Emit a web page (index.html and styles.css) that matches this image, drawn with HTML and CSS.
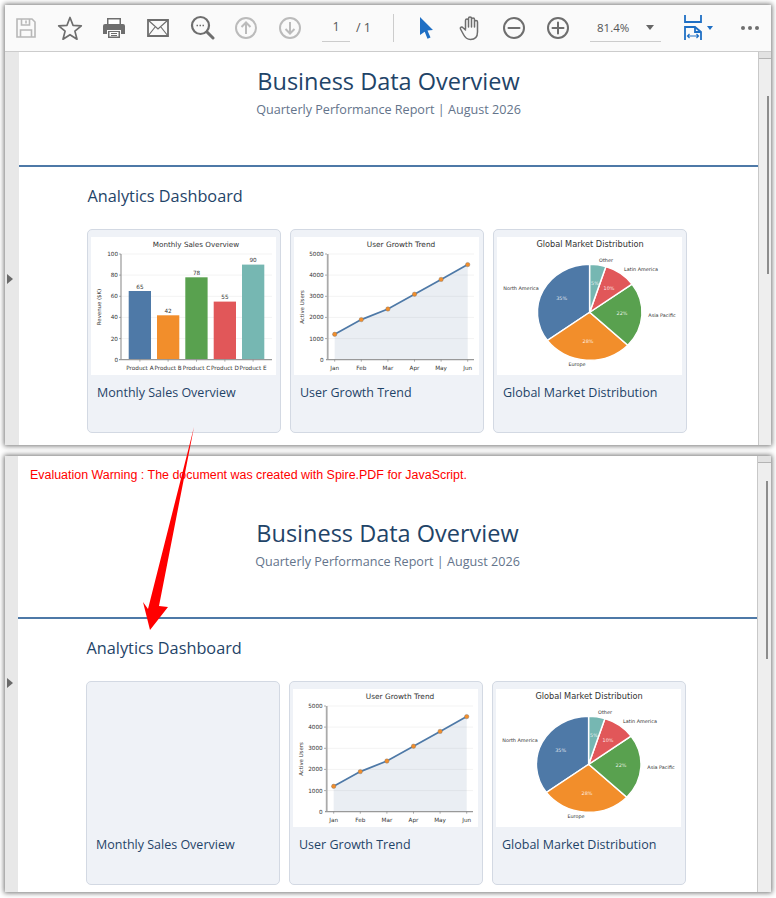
FILE: index.html
```html
<!DOCTYPE html>
<html lang="en">
<head>
  <meta charset="UTF-8">
  <meta name="viewport" content="width=device-width, initial-scale=1.0">
  <title>Business Data Overview</title>
  <link rel="stylesheet" href="styles.css">
</head>
<body>
  <!-- Reader window with toolbar -->
  <section class="window window-top">
    <header class="toolbar">
      <span class="tool"><svg width="24" height="24" viewBox="0 0 24 24" fill="none" stroke="#b8b8b8" stroke-width="1.6"><path d="M3 3h15l3 3v15H3z"/><path d="M7.500 3v6h8V3M12 4.500v3M6.500 21v-7h11v7"/></svg></span>
      <span class="tool"><svg width="26" height="26" viewBox="0 0 26 26" fill="none" stroke="#6e6e6e" stroke-width="1.700" stroke-linejoin="round"><path d="M13 2.500l3 7.800 8.300.5-6.400 5.300 2.100 8.100-7-4.500-7 4.500 2.100-8.100-6.400-5.300 8.300-.5z"/></svg></span>
      <span class="tool"><svg width="24" height="24" viewBox="0 0 24 24"><path fill="#6e6e6e" d="M5 2h14v6H5zM3 8h18a2 2 0 0 1 2 2v8h-4v-4H5v4H1v-8a2 2 0 0 1 2-2zM6 15h12v7H6z"/><path fill="#fff" d="M6.500 3.500h11V8h-11zM7.500 16h9v4.500h-9z"/><path stroke="#6e6e6e" d="M9 17.500h6M9 19.500h6"/></svg></span>
      <span class="tool"><svg width="24" height="20" viewBox="0 0 24 20" fill="none" stroke="#6e6e6e" stroke-width="1.800"><path d="M2 2h20v16H2z"/><path stroke-width="1.200" d="M2 2l10 9 10-9M2 18l7.500-9.500M22 18l-7.500-9.500"/></svg></span>
      <span class="tool"><svg width="25" height="25" viewBox="0 0 25 25" fill="none" stroke="#6e6e6e"><circle cx="10.500" cy="10.500" r="8.500" stroke-width="2.200"/><path stroke-width="3" stroke-linecap="round" d="M17 17l6 6"/><path stroke-width="1.500" stroke-dasharray="1.500 1.500" d="M6.500 10.500h8.500"/></svg></span>
      <span class="tool"><svg width="24" height="24" viewBox="0 0 24 24" fill="none" stroke="#bbb" stroke-width="2"><circle cx="12" cy="12" r="10"/><path d="M12 18V6.500M7.500 11L12 6.500l4.500 4.500"/></svg></span>
      <span class="tool"><svg width="24" height="24" viewBox="0 0 24 24" fill="none" stroke="#bbb" stroke-width="2"><circle cx="12" cy="12" r="10"/><path d="M12 6v11.500M7.500 13l4.500 4.500 4.500-4.500"/></svg></span>
      <span class="page-input">1</span>
      <span class="page-total">/ 1</span>
      <span class="divider"></span>
      <span class="tool"><svg width="16" height="24" viewBox="0 0 16 24"><path fill="#1f6fc4" d="M2 1l13 13-5.500.5 3 7-3 1.200-2.800-7L2 19z"/></svg></span>
      <span class="tool"><svg width="25" height="26" viewBox="0 0 24 26" fill="none" stroke="#6e6e6e" stroke-width="1.500" stroke-linecap="round" stroke-linejoin="round"><path d="M7 14V5.500a1.500 1.500 0 0 1 3 0V3.500a1.500 1.500 0 0 1 3 0V4.500a1.500 1.500 0 0 1 3 0V7a1.500 1.500 0 0 1 3 0v10c0 4.500-2.500 7.500-7 7.500-4 0-5.500-2-7-5l-3-5.500c-.8-1.500 1.300-2.800 2.500-1.300L7 15M10 5v7M13 4v8M16 5v7"/></svg></span>
      <span class="tool"><svg width="24" height="24" viewBox="0 0 24 24" fill="none" stroke="#6e6e6e" stroke-width="2"><circle cx="12" cy="12" r="10"/><path stroke-linecap="round" d="M6.500 12h11"/></svg></span>
      <span class="tool"><svg width="24" height="24" viewBox="0 0 24 24" fill="none" stroke="#6e6e6e" stroke-width="2"><circle cx="12" cy="12" r="10"/><path stroke-linecap="round" d="M6.500 12h11M12 6.500v11"/></svg></span>
      <span class="zoom-select">81.4%<i class="caret"></i></span>
      <span class="fit-tool"><svg width="18" height="25" viewBox="0 0 18 25" fill="none" stroke="#1f6fc4" stroke-width="1.800"><path d="M1 0v7h16V0"/><path d="M1 25V12h10l6 5v8"/><path d="M11 12v5h6"/><path stroke-width="1.200" d="M3.500 21h11M5.500 19l-2 2 2 2M12.500 19l2 2-2 2"/></svg><i class="caret caret-blue"></i></span>
      <span class="more-tool"><i></i><i></i><i></i></span>
    </header>

    <div class="viewer">
      <div class="strip"><i class="strip-arrow"></i></div>
      <main class="page">
        <div class="report-header">
          <h1 class="report-title">Business Data Overview</h1>
          <p class="report-subtitle">Quarterly Performance Report | August 2026</p>
        </div>
        <div class="dashboard">
          <h2 class="dashboard-title">Analytics Dashboard</h2>
          <div class="cards">
            <article class="card">
              <div class="chart">
                <svg class="chart-svg" width="185" height="138" viewBox="0 0 185 138">
                  <text class="c-title" x="105" y="10">Monthly Sales Overview</text>
                  <path class="c-grid" d="M30 17h151M30 38.100h151M30 59.300h151M30 80.400h151M30 101.600h151"/>
                  <rect x="37.700" y="54" width="22.300" height="68.700" fill="#4e79a7"/>
                  <rect x="66" y="78.300" width="22.300" height="44.400" fill="#f28e2b"/>
                  <rect x="94.300" y="40.300" width="22.300" height="82.400" fill="#59a14f"/>
                  <rect x="122.700" y="64.600" width="22.300" height="58.100" fill="#e15759"/>
                  <rect x="151" y="27.600" width="22.300" height="95.100" fill="#76b7b2"/>
                  <path class="c-axis" d="M30 17v105.700M28 122.700h153"/>
                  <path class="c-tick" d="M28 17h2M28 38.100h2M28 59.300h2M28 80.400h2M28 101.600h2M48.900 122.700v2M77.100 122.700v2M105.500 122.700v2M133.900 122.700v2M162.100 122.700v2"/>
                  <g class="c-num c-end">
                    <text x="27" y="19">100</text><text x="27" y="40.100">80</text><text x="27" y="61.300">60</text><text x="27" y="82.400">40</text><text x="27" y="103.600">20</text><text x="27" y="124.700">0</text>
                  </g>
                  <g class="c-num c-mid">
                    <text x="48.900" y="51.500">65</text><text x="77.100" y="75.800">42</text><text x="105.500" y="37.800">78</text><text x="133.900" y="62.100">55</text><text x="162.100" y="25.100">90</text>
                    <text x="48.900" y="132.500">Product A</text><text x="77.100" y="132.500">Product B</text><text x="105.500" y="132.500">Product C</text><text x="133.900" y="132.500">Product D</text><text x="162.100" y="132.500">Product E</text>
                  </g>
                  <text class="c-label" transform="translate(10 70) rotate(-90)">Revenue ($K)</text>
                </svg>
              </div>
              <h3 class="card-title">Monthly Sales Overview</h3>
            </article>

            <article class="card">
              <div class="chart">
                <svg class="chart-svg" width="185" height="138" viewBox="0 0 185 138">
                  <text class="c-title c-title-line" x="107" y="10">User Growth Trend</text>
                  <path class="c-grid" d="M34 17h146M34 38.100h146M34 59.300h146M34 80.400h146M34 101.600h146"/>
                  <path fill="#5d7f9f" opacity="0.13" d="M40.700 97.300L67.300 82.600 93.900 72 120.500 57.200 147.100 42.400 173.700 27.600V122.700H40.700z"/>
                  <path class="c-axis c-axis-line" d="M33.700 17v105.700"/>
                  <path class="c-axis" d="M32 122.700h148"/>
                  <path class="c-tick" d="M31 17h2M31 38.100h2M31 59.300h2M31 80.400h2M31 101.600h2M40.700 122.700v2M67.300 122.700v2M93.900 122.700v2M120.500 122.700v2M147.100 122.700v2M173.700 122.700v2"/>
                  <path fill="none" stroke="#4e79a7" stroke-width="1.700" d="M40.700 97.300L67.300 82.600 93.900 72 120.500 57.200 147.100 42.400 173.700 27.600"/>
                  <g fill="#f28e2b" stroke="#777" stroke-width="0.400">
                    <circle cx="40.700" cy="97.300" r="2.200"/><circle cx="67.300" cy="82.600" r="2.200"/><circle cx="93.900" cy="72" r="2.200"/><circle cx="120.500" cy="57.200" r="2.200"/><circle cx="147.100" cy="42.400" r="2.200"/><circle cx="173.700" cy="27.600" r="2.200"/>
                  </g>
                  <g class="c-num c-end">
                    <text x="29.700" y="19">5000</text><text x="29.700" y="40.100">4000</text><text x="29.700" y="61.300">3000</text><text x="29.700" y="82.400">2000</text><text x="29.700" y="103.600">1000</text><text x="29.700" y="124.700">0</text>
                  </g>
                  <g class="c-num c-mid">
                    <text x="40.700" y="132.500">Jan</text><text x="67.300" y="132.500">Feb</text><text x="93.900" y="132.500">Mar</text><text x="120.500" y="132.500">Apr</text><text x="147.100" y="132.500">May</text><text x="173.700" y="132.500">Jun</text>
                  </g>
                  <text class="c-label" transform="translate(9.500 70) rotate(-90)">Active Users</text>
                </svg>
              </div>
              <h3 class="card-title">User Growth Trend</h3>
            </article>

            <article class="card">
              <div class="chart">
                <svg class="chart-svg" width="185" height="138" viewBox="0 0 185 138">
                  <text class="c-title c-title-pie" x="93" y="10">Global Market Distribution</text>
                  <g transform="translate(92.700 75.300) scale(1.090 1)" stroke="#fff" stroke-width="1.400">
                    <path fill="#4e79a7" d="M0 0L0 -48A48 48 0 0 0 -38.830 28.210Z"/>
                    <path fill="#f28e2b" d="M0 0L-38.830 28.210A48 48 0 0 0 34.990 32.860Z"/>
                    <path fill="#59a14f" d="M0 0L34.990 32.860A48 48 0 0 0 38.830 -28.210Z"/>
                    <path fill="#e15759" d="M0 0L38.830 -28.210A48 48 0 0 0 14.830 -45.650Z"/>
                    <path fill="#76b7b2" d="M0 0L14.830 -45.650A48 48 0 0 0 0 -48Z"/>
                  </g>
                  <g class="c-pie">
                    <text x="109" y="24.500">Other</text><text x="144" y="33.800">Latin America</text><text x="24" y="52.800">North America</text><text x="165" y="79.800">Asia Pacific</text><text x="80" y="128.800">Europe</text>
                  </g>
                  <g class="c-pie c-pct">
                    <text x="64.700" y="62.800">35%</text><text x="91" y="105.500">28%</text><text x="125" y="77.800">22%</text><text x="112" y="52.800">10%</text><text x="98" y="47.500">5%</text>
                  </g>
                </svg>
              </div>
              <h3 class="card-title">Global Market Distribution</h3>
            </article>
          </div>
        </div>
      </main>
      <div class="scrollbar"><i class="scroll-btn"></i><i class="scroll-thumb"></i></div>
    </div>
  </section>

  <!-- Second capture, same page with the watermark line -->
  <section class="window window-bottom">
    <div class="viewer">
      <div class="strip"><i class="strip-arrow"></i></div>
      <main class="page">
        <p class="warning">Evaluation Warning : The document was created with Spire.PDF for JavaScript.</p>
        <div class="report-header">
          <h1 class="report-title">Business Data Overview</h1>
          <p class="report-subtitle">Quarterly Performance Report | August 2026</p>
        </div>
        <div class="dashboard">
          <h2 class="dashboard-title">Analytics Dashboard</h2>
          <div class="cards">
            <article class="card">
              <div class="chart chart-empty"></div>
              <h3 class="card-title">Monthly Sales Overview</h3>
            </article>

            <article class="card">
              <div class="chart">
                <svg class="chart-svg" width="185" height="138" viewBox="0 0 185 138">
                  <text class="c-title c-title-line" x="107" y="10">User Growth Trend</text>
                  <path class="c-grid" d="M34 17h146M34 38.100h146M34 59.300h146M34 80.400h146M34 101.600h146"/>
                  <path fill="#5d7f9f" opacity="0.13" d="M40.700 97.300L67.300 82.600 93.900 72 120.500 57.200 147.100 42.400 173.700 27.600V122.700H40.700z"/>
                  <path class="c-axis c-axis-line" d="M33.700 17v105.700"/>
                  <path class="c-axis" d="M32 122.700h148"/>
                  <path class="c-tick" d="M31 17h2M31 38.100h2M31 59.300h2M31 80.400h2M31 101.600h2M40.700 122.700v2M67.300 122.700v2M93.900 122.700v2M120.500 122.700v2M147.100 122.700v2M173.700 122.700v2"/>
                  <path fill="none" stroke="#4e79a7" stroke-width="1.700" d="M40.700 97.300L67.300 82.600 93.900 72 120.500 57.200 147.100 42.400 173.700 27.600"/>
                  <g fill="#f28e2b" stroke="#777" stroke-width="0.400">
                    <circle cx="40.700" cy="97.300" r="2.200"/><circle cx="67.300" cy="82.600" r="2.200"/><circle cx="93.900" cy="72" r="2.200"/><circle cx="120.500" cy="57.200" r="2.200"/><circle cx="147.100" cy="42.400" r="2.200"/><circle cx="173.700" cy="27.600" r="2.200"/>
                  </g>
                  <g class="c-num c-end">
                    <text x="29.700" y="19">5000</text><text x="29.700" y="40.100">4000</text><text x="29.700" y="61.300">3000</text><text x="29.700" y="82.400">2000</text><text x="29.700" y="103.600">1000</text><text x="29.700" y="124.700">0</text>
                  </g>
                  <g class="c-num c-mid">
                    <text x="40.700" y="132.500">Jan</text><text x="67.300" y="132.500">Feb</text><text x="93.900" y="132.500">Mar</text><text x="120.500" y="132.500">Apr</text><text x="147.100" y="132.500">May</text><text x="173.700" y="132.500">Jun</text>
                  </g>
                  <text class="c-label" transform="translate(9.500 70) rotate(-90)">Active Users</text>
                </svg>
              </div>
              <h3 class="card-title">User Growth Trend</h3>
            </article>

            <article class="card">
              <div class="chart">
                <svg class="chart-svg" width="185" height="138" viewBox="0 0 185 138">
                  <text class="c-title c-title-pie" x="93" y="10">Global Market Distribution</text>
                  <g transform="translate(92.700 75.300) scale(1.090 1)" stroke="#fff" stroke-width="1.400">
                    <path fill="#4e79a7" d="M0 0L0 -48A48 48 0 0 0 -38.830 28.210Z"/>
                    <path fill="#f28e2b" d="M0 0L-38.830 28.210A48 48 0 0 0 34.990 32.860Z"/>
                    <path fill="#59a14f" d="M0 0L34.990 32.860A48 48 0 0 0 38.830 -28.210Z"/>
                    <path fill="#e15759" d="M0 0L38.830 -28.210A48 48 0 0 0 14.830 -45.650Z"/>
                    <path fill="#76b7b2" d="M0 0L14.830 -45.650A48 48 0 0 0 0 -48Z"/>
                  </g>
                  <g class="c-pie">
                    <text x="109" y="24.500">Other</text><text x="144" y="33.800">Latin America</text><text x="24" y="52.800">North America</text><text x="165" y="79.800">Asia Pacific</text><text x="80" y="128.800">Europe</text>
                  </g>
                  <g class="c-pie c-pct">
                    <text x="64.700" y="62.800">35%</text><text x="91" y="105.500">28%</text><text x="125" y="77.800">22%</text><text x="112" y="52.800">10%</text><text x="98" y="47.500">5%</text>
                  </g>
                </svg>
              </div>
              <h3 class="card-title">Global Market Distribution</h3>
            </article>
          </div>
        </div>
      </main>
      <div class="scrollbar"><i class="scroll-btn"></i><i class="scroll-thumb"></i></div>
    </div>
  </section>

  <!-- Red annotation arrow over both captures -->
  <svg class="annotation" width="776" height="898" viewBox="0 0 776 898">
    <path fill="#ff0000" d="M194 427L159 606 168 607 150 630 143 602 148 609z"/>
  </svg>
</body>
</html>
```

FILE: styles.css
```css
* {
  margin: 0;
  padding: 0;
  box-sizing: border-box;
}

html, body {
  height: 898px;
  overflow: hidden;
}

body {
  font-family: "Open Sans", sans-serif;
  background: #fff;
  color: #1f3a5f;
  position: relative;
  display: flex;
  flex-direction: column;
  gap: 11px;
  padding: 5px 5px 0;
}

i {
  display: block;
}

/* Windows */
.window {
  width: 766px;
  display: flex;
  flex-direction: column;
  overflow: hidden;
  background: #fff;
  box-shadow: 0 0 5px 1px rgba(0, 0, 0, 0.55);
}

.window-top {
  height: 440px;
}

.window-bottom {
  height: 436px;
}

/* Toolbar */
.toolbar {
  height: 47px;
  flex: none;
  display: flex;
  align-items: center;
  background: #fafafa;
  border-bottom: 1px solid #ccc;
  padding-bottom: 1px;
  font-size: 12.5px;
  color: #555;
}

.tool {
  width: 44px;
  flex: none;
  display: flex;
  justify-content: center;
  align-items: center;
}

.tool:first-child {
  margin-left: -1px;
}

.page-input {
  width: 28px;
  height: 28px;
  margin-left: 10px;
  margin-top: 1px;
  line-height: 26px;
  text-align: center;
  border-bottom: 1px solid #ccc;
}

.page-total {
  margin-left: 6px;
  width: 17px;
}

.divider {
  width: 1px;
  height: 28px;
  margin-left: 20px;
  margin-right: 10px;
  background: #ccc;
}

.zoom-select {
  width: 71px;
  height: 28px;
  margin-left: 10px;
  margin-top: 1px;
  padding-left: 7px;
  line-height: 26px;
  font-size: 11.5px;
  border-bottom: 1px solid #ccc;
  display: flex;
  align-items: center;
  justify-content: space-between;
  padding-right: 7px;
}

.caret {
  width: 0;
  height: 0;
  border-left: 4.5px solid transparent;
  border-right: 4.5px solid transparent;
  border-top: 5px solid #666;
}

.caret-blue {
  border-left-width: 3.5px;
  border-right-width: 3.5px;
  border-top: 4px solid #1f6fc4;
}

.fit-tool {
  margin-left: 23px;
  display: flex;
  align-items: center;
  gap: 5px;
  width: 30px;
}

.more-tool {
  margin-left: 27px;
  display: flex;
  gap: 3px;
}

.more-tool i {
  width: 4px;
  height: 4px;
  border-radius: 50%;
  background: #6e6e6e;
}

/* Viewer area */
.viewer {
  flex: 1;
  min-height: 0;
  display: flex;
}

.strip {
  width: 14px;
  flex: none;
  background: #e8e8e8;
  padding: 222px 0 0 2px;
}

.window-bottom .strip {
  width: 13px;
  padding-top: 222px;
}

.strip-arrow {
  width: 0;
  height: 0;
  border-top: 5.5px solid transparent;
  border-bottom: 5.5px solid transparent;
  border-left: 6px solid #6a6a6a;
}

.page {
  flex: 1;
  min-width: 0;
  overflow: hidden;
  background: #fff;
}

.scrollbar {
  width: 13px;
  flex: none;
  background: #eee;
  border-left: 1px solid #c8c8c8;
}

.window-bottom .scrollbar {
  width: 14px;
}

.scroll-btn {
  height: 7px;
  background: #e2e2e2;
  border-bottom: 1px solid #b4b4b4;
}

.scroll-thumb {
  width: 2px;
  height: 178px;
  margin: 37px 0 0 8px;
  background: #8c8c8c;
}

.window-bottom .scroll-thumb {
  margin-top: 18px;
}

/* Report page */
.warning {
  height: 48px;
  padding: 11px 0 0 12px;
  font-family: "Liberation Sans", Arial, sans-serif;
  font-size: 12.450px;
  line-height: 16px;
  color: #ff0000;
}

.report-header {
  padding: 14px 0 45px;
  text-align: center;
  border-bottom: 2px solid #4e79a7;
}

.report-title {
  font-size: 23.500px;
  line-height: 30px;
  font-weight: 400;
  color: #1f4468;
}

.report-subtitle {
  margin-top: 4px;
  font-size: 12.600px;
  line-height: 20px;
  color: #64748b;
}

.dashboard {
  padding: 17px 0 0 67.500px;
}

.dashboard-title {
  font-size: 16.300px;
  line-height: 24px;
  font-weight: 400;
  color: #1f4468;
  margin-left: 1px;
}

.cards {
  display: flex;
  gap: 9px;
  margin-top: 21px;
}

.card {
  width: 194px;
  height: 204px;
  flex: none;
  background: #eff2f7;
  border: 1.500px solid #d3d9e3;
  border-radius: 5px;
  padding: 6.500px 3.500px 0;
}

.chart {
  width: 185px;
  height: 138px;
  background: #fff;
}

.chart-empty {
  background: transparent;
}

.chart-svg {
  display: block;
}

.card-title {
  margin: 8px 0 0 6px;
  font-size: 12.500px;
  line-height: 20px;
  font-weight: 400;
  color: #1f4468;
}

/* Chart text and lines */
.chart-svg text {
  font-family: "DejaVu Sans", sans-serif;
  fill: #333;
}

.c-title {
  font-size: 7.200px;
  text-anchor: middle;
}

.c-title-line {
  font-size: 7.400px;
}

.c-title-pie {
  font-size: 8.200px;
}

.c-num {
  font-size: 5.700px;
}

.c-end {
  text-anchor: end;
}

.c-mid {
  text-anchor: middle;
}

.c-label {
  font-size: 5.400px;
  text-anchor: middle;
}

.c-pie {
  font-size: 4.900px;
  text-anchor: middle;
}

.chart-svg .c-pct text {
  fill: #fff;
  opacity: 0.85;
}

.c-grid {
  fill: none;
  stroke: #f3f3f3;
  stroke-width: 1;
}

.c-axis {
  fill: none;
  stroke: #999;
  stroke-width: 1.200;
}

.c-axis-line {
  stroke-width: 1.800;
  stroke: #aaa;
}

.c-tick {
  fill: none;
  stroke: #777;
  stroke-width: 0.600;
}

/* Annotation */
.annotation {
  position: absolute;
  top: 0;
  left: 0;
  pointer-events: none;
}
```
